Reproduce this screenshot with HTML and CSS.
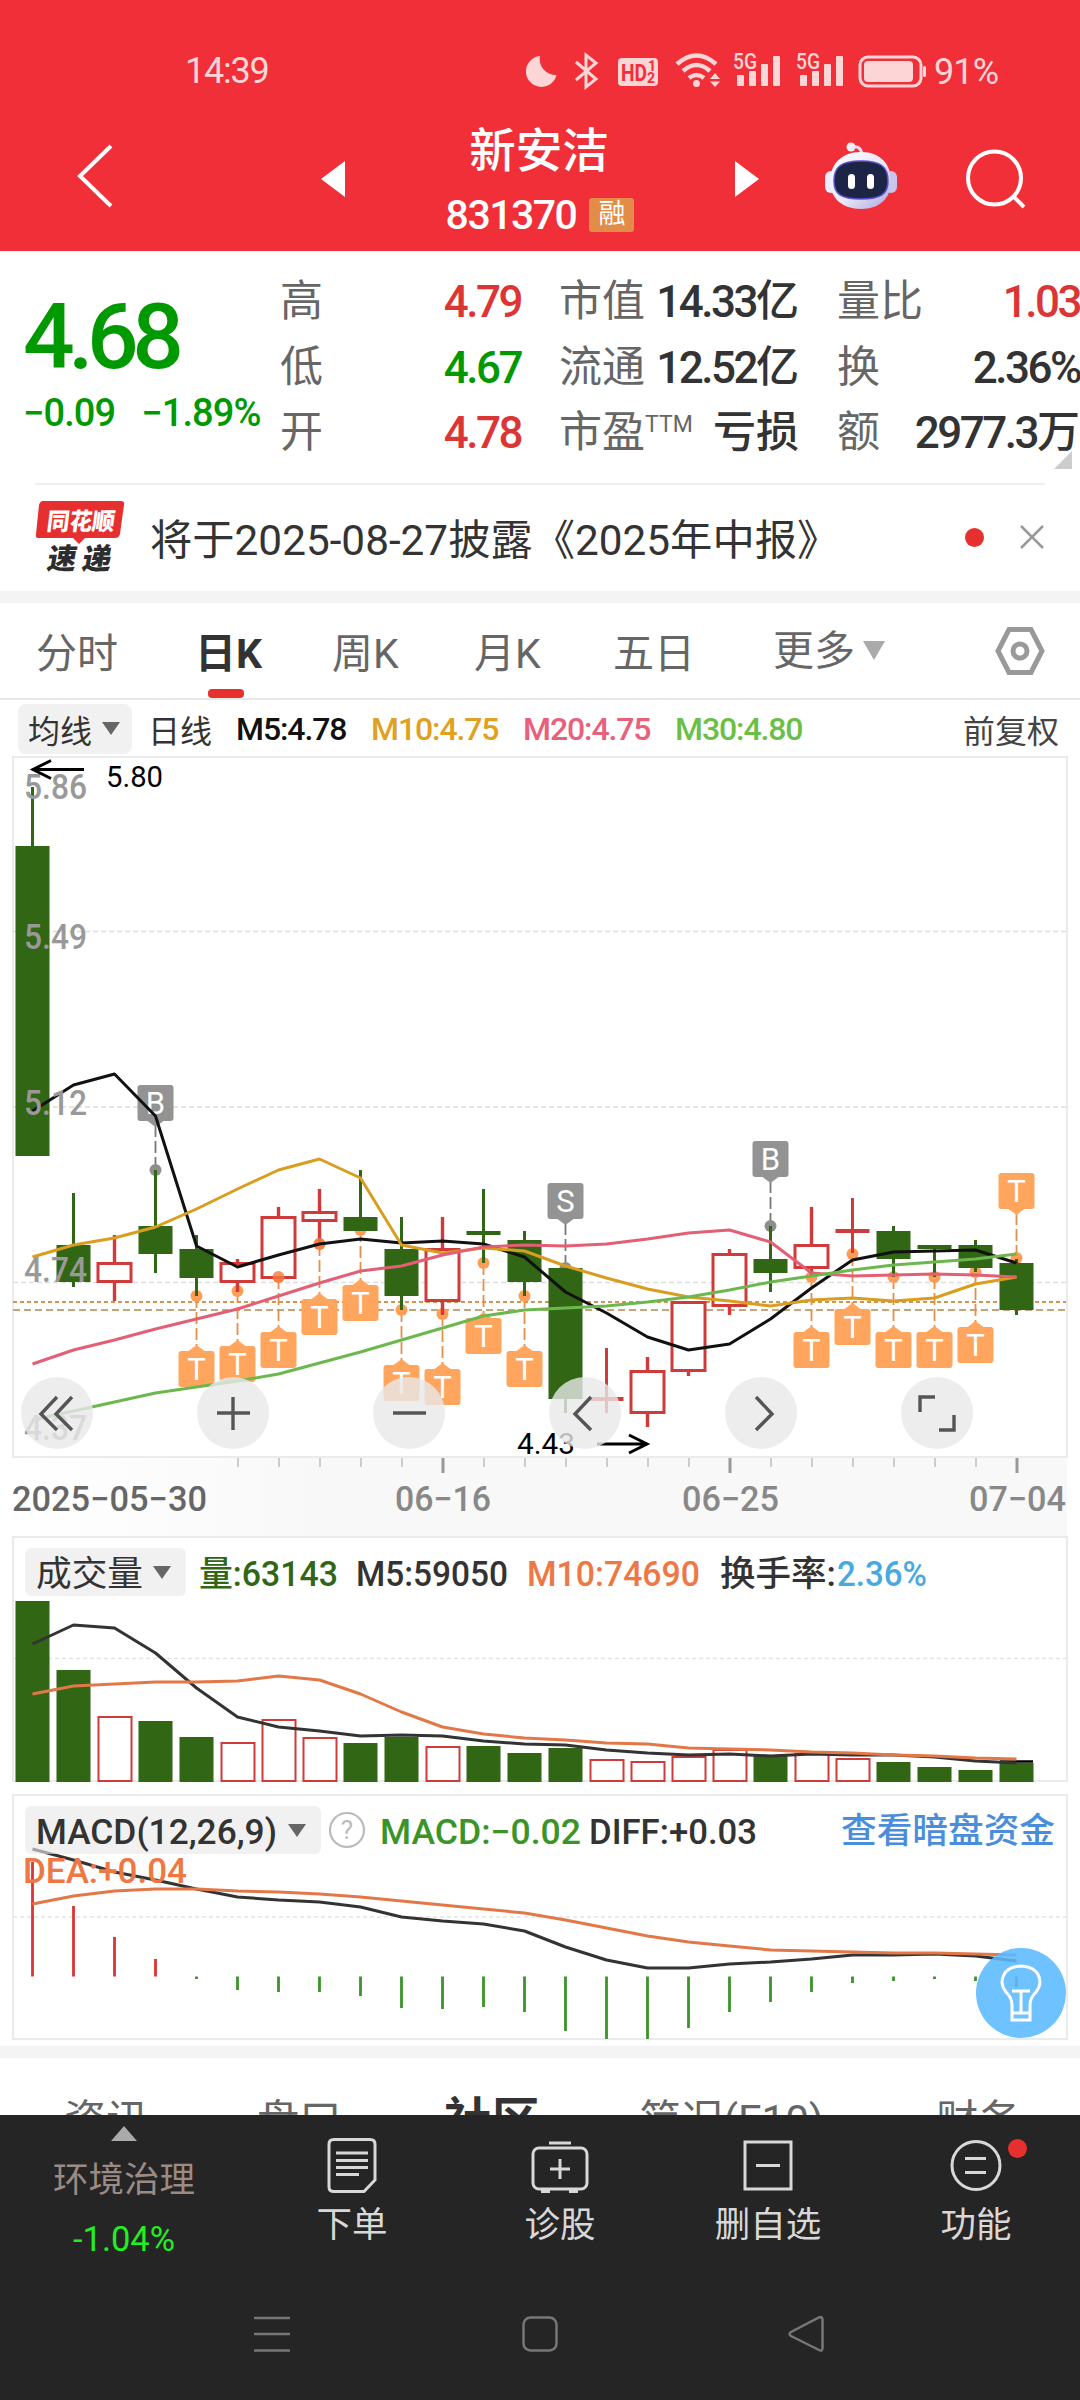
FILE: index.html
```html
<!DOCTYPE html>
<html lang="zh-CN">
<head>
<meta charset="utf-8">
<title>新安洁 831370</title>
<link rel="stylesheet" href="styles.css">
</head>
<body>
<header class="top">
  <div class="status">
    <span class="clock">14:39</span>
    <svg class="status-icons" viewBox="520 40 490 60" width="490" height="60">
      <path d="M540 56A15.500 15.500 0 1 0 556.500 75A16 16 0 0 1 540 56Z"/>
      <path class="ln" d="M576 62L596 79L586 87V55L596 63L576 80"/>
      <rect x="618" y="58" width="40" height="28" rx="4"/>
      <text class="hd" x="621" y="80.500" font-size="23" textLength="26" lengthAdjust="spacingAndGlyphs">HD</text>
      <text class="hd" x="648" y="71" font-size="14">1</text>
      <text class="hd" x="647" y="83" font-size="14">2</text>
      <path class="wf" d="M677 64Q696.500 47 716 64M683 71Q696.500 59 710 71M689 78Q696.500 72 704 78"/>
      <circle cx="696.500" cy="83.500" r="3.500"/>
      <path d="M715 73l5 6h-10zM715 87l5-5.500h-10z"/>
      <g id="sig"><text x="733" y="69" font-size="22" font-weight="500" textLength="24" lengthAdjust="spacingAndGlyphs">5G</text>
      <rect x="737" y="75" width="7" height="11" rx="1"/><rect x="749" y="71" width="7" height="15" rx="1"/><rect x="761" y="64" width="7" height="22" rx="1"/><rect x="773" y="56" width="7" height="30" rx="1"/></g>
      <use href="#sig" x="63"/>
      <rect class="bt" x="860" y="57" width="61" height="29" rx="8"/>
      <rect x="864" y="61" width="49" height="21" rx="4"/>
      <rect x="923" y="66" width="3" height="11" rx="1.500"/>
      <text x="934" y="84" font-size="36" textLength="65">91%</text>
    </svg>
  </div>
  <div class="titlebar">
    <svg class="back" viewBox="70 140 50 72" width="50" height="72"><path d="M111 146L80 176L111 206"/></svg>
    <svg class="tri" viewBox="0 0 24 36" width="24" height="36"><path d="M24 0V36L0 18Z"/></svg>
    <div class="title">
      <div class="name">新安洁</div>
      <div class="code"><span>831370</span><b class="badge">融</b></div>
    </div>
    <svg class="tri right" viewBox="0 0 24 36" width="24" height="36"><path d="M0 0V36L24 18Z"/></svg>
    <svg class="robot" viewBox="824 140 74 72" width="74" height="72">
      <defs><linearGradient id="rb" x1="0" y1="0" x2="1" y2="1"><stop offset="0" stop-color="#fff"/><stop offset=".55" stop-color="#e8e6fa"/><stop offset="1" stop-color="#a9a4dc"/></linearGradient></defs>
      <path d="M852 147Q861 145 862 155" fill="none" stroke="#dcdcf5" stroke-width="3"/>
      <circle cx="851" cy="147" r="4.500" fill="#eeeefa"/>
      <rect x="825" y="171" width="12" height="22" rx="6" fill="#eeedfb"/><rect x="885" y="171" width="12" height="22" rx="6" fill="#c9c5ec"/>
      <path d="M861 152C881 152 891 165 891 181C891 198 880 209 861 209C842 209 830 198 830 181C830 165 841 152 861 152Z" fill="url(#rb)"/>
      <path d="M861 161C881 161 888 167 888 181C888 194 881 199 861 199C841 199 834 194 834 181C834 167 841 161 861 161Z" fill="#1d2547" stroke="#5a50c8" stroke-width="1.500"/>
      <rect x="848" y="174" width="7" height="15" rx="3.500" fill="#fff"/><rect x="867" y="174" width="7" height="15" rx="3.500" fill="#fff"/>
    </svg>
    <svg class="search" viewBox="960 146 70 66" width="70" height="66"><circle cx="994.500" cy="178" r="26.500"/><path d="M1014 197L1024 207"/></svg>
  </div>
</header>

<section class="quote">
  <div class="last">
    <div class="price">4.68</div>
    <div class="change"><span>−0.09</span><span>−1.89%</span></div>
  </div>
  <dl class="stats">
    <dt>高</dt><dd class="up">4.79</dd><dt>市值</dt><dd>14.33<i>亿</i></dd><dt>量比</dt><dd class="up">1.03</dd>
    <dt>低</dt><dd class="down">4.67</dd><dt>流通</dt><dd>12.52<i>亿</i></dd><dt>换</dt><dd>2.36%</dd>
    <dt>开</dt><dd class="up">4.78</dd><dt>市盈<sup>TTM</sup></dt><dd><i>亏损</i></dd><dt>额</dt><dd>2977.3<i>万</i></dd>
  </dl>
  <svg class="corner" viewBox="0 0 18 18" width="18" height="18"><path d="M18 0V18H0Z"/></svg>
</section>

<section class="notice">
  <svg viewBox="36 500 92 74" width="92" height="74">
    <path d="M44 501H122Q126 501 125 505L121 534Q120 538 116 538H86L80 544L74 538H40Q36 538 37 534L40 505Q41 501 44 501Z" fill="#e6302f"/>
    <text class="logo" transform="translate(47 529.500) skewX(-7)" font-size="24" fill="#fff" textLength="68" lengthAdjust="spacingAndGlyphs">同花顺</text>
    <text class="logo" transform="translate(47 569) skewX(-10)" font-size="29" fill="#2d2d2d" textLength="64" lengthAdjust="spacing">速递</text>
  </svg>
  <p>将于2025-08-27披露《2025年中报》</p>
  <i class="dot"></i>
  <svg class="close" viewBox="0 0 24 24" width="24" height="24"><path d="M1 1L23 23M23 1L1 23"/></svg>
</section>

<nav class="periods">
  <a>分时</a><a class="on">日K</a><a>周K</a><a>月K</a><a>五日</a>
  <a class="more">更多<svg viewBox="0 0 22 19" width="22" height="19"><path d="M0 0H22L11 19Z"/></svg></a>
  <svg class="gear" viewBox="0 0 50 48" width="50" height="48"><path d="M14 2.500H36L47 24L36 45.500H14L3 24Z"/><circle cx="25" cy="24" r="7"/></svg>
</nav>

<div class="legend">
  <span class="pill">均线<svg viewBox="0 0 18 13" width="18" height="13"><path d="M0 0H18L9 13Z"/></svg></span>
  <span>日线</span><span class="ma m5">M5:4.78</span><span class="ma m10">M10:4.75</span><span class="ma m20">M20:4.75</span><span class="ma m30">M30:4.80</span><span class="adj">前复权</span>
</div>

<main class="charts">
  <svg id="kline" viewBox="0 756 1080 780" width="1080" height="780"></svg>
  <svg id="volume" viewBox="0 1536 1080 258" width="1080" height="258"></svg>
  <svg id="macd" viewBox="0 1794 1080 252" width="1080" height="252"></svg>
</main>

<nav class="sections"><a>资讯</a><a>盘口</a><a class="on">社区</a><a>简况(F10)</a><a>财务</a></nav>

<footer class="bottom">
  <div class="actions">
    <div class="sector"><svg viewBox="0 0 26 15" width="26" height="15"><path d="M13 0L26 15H0Z"/></svg><span>环境治理</span><em>-1.04%</em></div>
    <a><svg viewBox="0 0 60 60" width="60" height="60"><path d="M12 4.500H48Q53 4.500 53 9V45L42 56.500H12Q7 56.500 7 52V9Q7 4.500 12 4.500Z"/><path d="M14 18H46M14 25.500H46M14 32.500H46M14 39.500H37"/></svg>下单</a>
    <a><svg viewBox="0 0 60 60" width="60" height="60"><rect x="3" y="13" width="54" height="41" rx="6"/><path d="M19 8H41M30 24V44M20 34H40"/><path class="thick" d="M11 56H20M39 56H48"/></svg>诊股</a>
    <a><svg viewBox="0 0 60 60" width="60" height="60"><rect x="7" y="7" width="46" height="47"/><path d="M18 30.500H42"/></svg>删自选</a>
    <a><svg viewBox="0 0 60 60" width="60" height="60"><circle cx="30" cy="30.500" r="24"/><path d="M19 23.500H40M19 37.500H40"/></svg>功能<i class="dot"></i></a>
  </div>
  <div class="sysnav">
    <svg viewBox="0 0 40 40" width="40" height="40"><path d="M2 4H38M2 20H38M2 36.500H38"/></svg>
    <svg viewBox="0 0 40 40" width="40" height="40"><rect x="3.500" y="3.500" width="33" height="33" rx="7"/></svg>
    <svg viewBox="2 0 40 40" width="40" height="40"><path d="M33 3.500Q36.500 2 36.500 6V34Q36.500 38 33 36L5 22Q2 20 5 18Z"/></svg>
  </div>
</footer>
<script src="charts.js"></script>
</body>
</html>
```
FILE: styles.css
```css
* { box-sizing: border-box; }
body { margin: 0; width: 1080px; height: 2400px; overflow: hidden; background: #fff; color: #333; font-family: Roboto, "Noto Sans CJK SC", sans-serif; display: flex; flex-direction: column; }
svg { display: block; flex: none; }
.top { height: 251px; background: #f12f38; color: #fff; flex: none; }
.status { height: 100px; padding: 40px 70px 0 185px; display: flex; justify-content: space-between; color: #fcd5d7; }
.clock { font-size: 36px; line-height: 63px; letter-spacing: -1.2px; }
.status-icons { fill: #fcd5d7; }
.status-icons .hd { fill: #f12f38; font-weight: 700; }
.ln, .wf, .bt { fill: none; stroke: #fcd5d7; stroke-width: 3; }
.wf { stroke-width: 4.500; }
.titlebar { display: flex; height: 151px; padding: 20px 50px 0 70px; align-items: flex-start; }
.back { margin-top: 20px; }
.back path, .search * { fill: none; stroke: #fff; stroke-width: 4; }
.tri { margin: 41px 0 0 201px; fill: #fff; }
.tri.right { margin-left: 0; }
.title { width: 388px; margin-right: 2px; text-align: center; }
.name { font-size: 46.500px; font-weight: 500; line-height: 62px; }
.code { display: flex; justify-content: center; align-items: center; gap: 13px; height: 66px; font-size: 41px; font-weight: 500; letter-spacing: -1.500px; padding-left: 2px; }
.badge { width: 45px; height: 34px; border-radius: 3px; background: #e38c47; font-size: 27px; line-height: 33px; font-weight: 400; letter-spacing: 0; }
.robot { margin: 20px 0 0 65px; }
.search { margin: 26px 0 0 62px; }

.quote { height: 232px; display: flex; position: relative; flex: none; }
.last { width: 280px; padding: 36px 0 0 23px; color: #090; }
.price { font-size: 91px; line-height: 100px; font-weight: 500; letter-spacing: -6.500px; }
.change { display: flex; gap: 26px; font-size: 38px; line-height: 50px; margin-top: 1px; letter-spacing: -.9px; white-space: nowrap; font-weight: 500; }
.stats { margin: 18px 0 0; width: 800px; display: grid; grid-template-columns: 90px 151px 172px 106px 123px 158px; grid-auto-rows: 65.500px; }
.stats dt, .stats dd { margin: 0; line-height: 65px; white-space: nowrap; }
.stats dt { font-size: 43px; color: #666; }
.stats dd { font-size: 44px; font-weight: 500; letter-spacing: -2.500px; display: flex; justify-content: flex-end; padding-top: 1px; }
.stats dd i { font-style: normal; font-size: 43px; letter-spacing: 0; margin-top: -1px; }
.stats dt:nth-child(6n+3), .stats dt:nth-child(6n+5) { padding-left: 38px; }
.stats sup { font-size: 23px; line-height: 1; vertical-align: 15px; }
.up { color: #dc3535; }
.down { color: #090; }
.corner { position: absolute; right: 8px; bottom: 14px; fill: #ccc; }

.notice { height: 108px; margin: 0 35px; border-top: 2px solid #eee; display: flex; align-items: center; padding: 0 1px 2px 0; flex: none; }
.notice p { margin: -2px 0 0 23px; font-size: 42.300px; flex: 1; white-space: nowrap; }
.logo { font-family: "Noto Sans CJK SC", sans-serif; font-weight: 900; }
.dot { width: 19px; height: 19px; border-radius: 50%; background: #e6302f; }
.close { margin-left: 36px; stroke: #999; stroke-width: 2.500; }

.periods { height: 109px; border-top: 12px solid #f4f4f4; border-bottom: 2px solid #e8e8e8; display: grid; grid-template-columns: 159px 137px 142px 139px 160px 222px 50px; padding-left: 36px; align-items: center; font-size: 41px; color: #666; flex: none; }
.periods a { line-height: 102px; height: 95px; }
.periods .on { font-weight: 700; color: #333; position: relative; }
.periods .on::after { content: ""; position: absolute; left: 13px; bottom: 0; width: 36px; height: 9px; border-radius: 4px; background: #e6302f; }
.more { display: flex; align-items: center; gap: 8px; fill: #aaa; }
.gear { fill: none; stroke: #999; stroke-width: 5; }

.legend { height: 56px; flex: none; display: grid; grid-template-columns: 130px 88px 135px 152px 152px 288px 100px; padding: 1px 0 0 18px; align-items: center; font-size: 32px; color: #333; }
.legend .ma { font-weight: 500; letter-spacing: -1.100px; }
.pill { width: 114px; height: 50px; border-radius: 8px; background: #f1f1f1; display: flex; align-items: center; gap: 10px; padding-left: 10px; fill: #666; }
.m5 { color: #111; } .m10 { color: #e0a020; } .m20 { color: #e8607a; } .m30 { color: #6abf47; }
.adj { color: #444; }

.charts { flex: none; }

.sections { height: 69px; flex: none; overflow: hidden; border-top: 12px solid #f4f4f4; display: grid; grid-template-columns: 193px 187px 195px 297px 100px; padding: 30px 0 0 64px; font-size: 42.300px; line-height: 66px; color: #666; white-space: nowrap; }
.sections .on { font-size: 48px; font-weight: 700; color: #333; }

.bottom { height: 285px; flex: none; background: #252525; color: #d8d8d8; }
.actions { display: grid; grid-template-columns: 248px repeat(4, 208px); height: 185px; padding-top: 11px; }
.sector { display: flex; flex-direction: column; align-items: center; fill: #aaa; color: #9c8a84; font-size: 35.500px; }
.sector span { margin-top: 13px; line-height: 52px; }
.sector em { font-style: normal; font-size: 34.500px; color: #2e2; margin-top: 11px; line-height: 44px; }
.actions a { position: relative; display: flex; flex-direction: column; align-items: center; font-size: 35.500px; line-height: 60px; padding-top: 9px; }
.actions a > svg { fill: none; stroke: #d8d8d8; stroke-width: 3; }
.actions .thick { stroke-width: 4; }
.actions .dot { position: absolute; left: 136px; top: 13px; }
.sysnav { display: grid; grid-template-columns: repeat(3, 40px); column-gap: 228px; padding: 14px 0 0 252px; fill: none; stroke: #777; stroke-width: 2.500; }
```
FILE: charts.js
```js
const NS = 'http://www.w3.org/2000/svg';
const X0 = 32.5, STEP = 41, W = 34;
const cx = i => X0 + STEP * i;
const GREEN = '#306614', RED = '#cf3a3a';

function add(svg, tag, attrs, text) {
  const e = document.createElementNS(NS, tag);
  for (const k in attrs) e.setAttribute(k, attrs[k]);
  if (text) e.textContent = text;
  svg.appendChild(e);
  return e;
}
function label(svg, x, y, size, fill, text, width, weight = 500) {
  return add(svg, 'text', { x, y, 'font-size': size, fill, 'font-weight': weight, textLength: width, lengthAdjust: 'spacingAndGlyphs' }, text);
}
function line(svg, x1, y1, x2, y2, stroke, w, dash) {
  add(svg, 'line', { x1, y1, x2, y2, stroke, 'stroke-width': w, ...(dash ? { 'stroke-dasharray': dash } : {}) });
}
function curve(svg, ys, color) {
  add(svg, 'polyline', { points: ys.map((y, i) => cx(i) + ',' + y).join(' '), fill: 'none', stroke: color, 'stroke-width': 3, 'stroke-linejoin': 'round' });
}
function frame(svg, y, h) {
  add(svg, 'rect', { x: 13, y, width: 1054, height: h, fill: 'none', stroke: '#ebebeb', 'stroke-width': 2 });
}
function pill(svg, x, y, w, triX) {
  add(svg, 'rect', { x, y, width: w, height: 48, rx: 6, fill: '#e8e8e8', opacity: .62 });
  add(svg, 'path', { d: `M${triX} ${y + 18}h18l-9 13z`, fill: '#666' });
}

/* Candlesticks: high, body top, body bottom, low, type */
const candles = [
  [787,846,1156,1156,'g'],[1193,1245,1282,1287,'g'],[1235,1262,1283,1301,'r'],[1170,1226,1254,1273,'g'],
  [1235,1249,1278,1296,'g'],[1259,1262,1283,1292,'r'],[1207,1216,1279,1279,'r'],[1189,1211,1222,1243,'r'],
  [1170,1217,1231,1231,'g'],[1217,1249,1296,1310,'g'],[1217,1248,1302,1315,'r'],[1189,1231,1235,1263,'g'],
  [1231,1240,1282,1296,'g'],[1268,1268,1399,1413,'g'],[1348,1397,1401,1413,'c'],[1357,1370,1414,1427,'r'],
  [1301,1301,1372,1376,'r'],[1249,1253,1307,1315,'r'],[1226,1259,1273,1292,'g'],[1207,1244,1269,1277,'r'],
  [1198,1229,1233,1253,'c'],[1226,1231,1259,1277,'g'],[1245,1245,1249,1277,'g'],[1240,1245,1268,1272,'g'],
  [1259,1263,1310,1315,'g']];
const marks = [[3,1170,'B'],[4,1296,'T'],[5,1291,'T'],[6,1277,'T'],[7,1244,'T'],[8,1230,'T'],[9,1310,'T'],
  [10,1314,'T'],[11,1263,'T'],[12,1296,'T'],[13,1268,'S'],[18,1226,'B'],[19,1277,'T'],[20,1254,'T'],
  [21,1277,'T'],[22,1277,'T'],[23,1272,'T'],[24,1258,'T',1]];

const k = document.getElementById('kline');
const defs = add(k, 'defs', {});
const fade = add(defs, 'linearGradient', { id: 'fade' });
add(fade, 'stop', { offset: 0, 'stop-color': '#fff' });
add(fade, 'stop', { offset: .3, 'stop-color': '#f8f8f8' });
add(fade, 'stop', { offset: 1, 'stop-color': '#f8f8f8' });
add(k, 'rect', { x: 13, y: 1458, width: 1054, height: 78, fill: 'url(#fade)' });
frame(k, 757, 700);
[931.5, 1107, 1282.5].forEach(y => line(k, 13, y, 1066, y, '#dedede', 1.4, '5 3'));
line(k, 13, 1302, 1066, 1302, '#d4934e', 2, '4 3');
line(k, 13, 1310, 1066, 1310, '#c4a67a', 2, '7 4');

marks.forEach(([i, y, t, up]) => {
  const x = cx(i), above = t !== 'T' || up;
  const col = t === 'T' ? '#ffa55e' : '#939393', top = above ? y - 85 : y + 55;
  line(k, x, above ? top + 40 : y, x, above ? y : top - 2, t === 'T' ? '#e88d48' : '#777', 1.8, '12 4');
  add(k, 'circle', { cx: x, cy: y, r: 6, fill: t === 'T' ? '#ff9c55' : '#8e8e8e' });
  add(k, 'path', { d: above ? `M${x - 8} ${top + 36}h16l-8 6z` : `M${x - 8} ${top}h16l-8-6z`, fill: col });
  add(k, 'rect', { x: x - 18, y: top, width: 36, height: 36, rx: 3, fill: col });
  add(k, 'text', { x, y: top + 29, 'font-size': 31, fill: '#fff', 'text-anchor': 'middle' }, t);
});
candles.forEach(([h, t, b, l, c], i) => {
  const x = cx(i), col = c === 'g' ? GREEN : RED;
  if (c === 'r') {
    line(k, x, h, x, t, col, 3.4); line(k, x, b, x, l, col, 3.4);
    add(k, 'rect', { x: x - 16.5, y: t + 1.5, width: 33, height: b - t - 3, fill: '#fff', stroke: col, 'stroke-width': 3 });
  } else {
    line(k, x, h, x, l, col, 3);
    add(k, 'rect', { x: x - W / 2, y: t, width: W, height: b - t, fill: col });
  }
});
/* low markers that sit over a hollow body */
[[6, 1277], [7, 1244]].forEach(([i, y]) => add(k, 'circle', { cx: cx(i), cy: y, r: 6, fill: '#f47a3c', opacity: .8 }));
curve(k, [1111,1085,1074,1116,1246,1267,1255,1244,1239,1243,1241,1244,1257,1292,1313,1337,1350,1344,1319,1288,1260,1252,1251,1250,1263], '#111');
curve(k, [1257,1245,1238,1227,1209,1189,1170,1159,1178,1245,1253,1248,1251,1266,1278,1289,1297,1301,1306,1300,1298,1301,1298,1284,1277], '#d99d1f');
curve(k, [1364,1350,1340,1329,1319,1309,1296,1283,1271,1266,1255,1247,1245,1246,1244,1239,1233,1230,1242,1273,1276,1275,1274,1275,1277], '#e35f73');
curve(k, [1420,1411,1402,1393,1387,1381,1374,1363,1352,1340,1328,1316,1310,1308,1306,1302,1297,1290,1282,1276,1270,1265,1262,1259,1254], '#6cb84e');
[['5.86', 799], ['5.49', 949], ['5.12', 1115], ['4.74', 1282], ['4.37', 1440]].forEach(([t, y]) =>
  label(k, 24, y, 35.5, '#999', t, 63));
add(k, 'path', { d: 'M84 769.500H33M51 760.500L33 769.500L51 778.500M597 1444H647M629 1435L647 1444L629 1453', fill: 'none', stroke: '#000', 'stroke-width': 3 });
label(k, 106, 787, 30, '#000', '5.80', 57, 400);
label(k, 517, 1454, 30, '#000', '4.43', 58, 400);

[57, 233, 409, 585, 761, 937].forEach((x, i) => {
  add(k, 'circle', { cx: x, cy: 1413, r: 36, fill: '#e9e9e9', opacity: .8 });
  const d = [
    'M0-16L-16 1L0 17M15-16L-1 1L15 17', 'M-16 0H17M0-16V17', 'M-16 0H17',
    'M6-16L-10 1L6 17', 'M-5-16L11 1L-5 17', 'M-17-1V-16H-2M17 2V17H2'][i];
  add(k, 'path', { d, transform: `translate(${x} 1413)`, fill: 'none', stroke: '#555', 'stroke-width': 3.4 });
});
for (let i = 5; i < 25; i++) {
  const big = [10, 17, 24].includes(i);
  line(k, cx(i) + .5, 1458, cx(i) + .5, big ? 1473 : 1467, big ? '#999' : '#ccc', big ? 3 : 2);
}
label(k, 12, 1511, 35, '#666', '2025−05−30', 195);
label(k, 395, 1511, 35, '#888', '06−16', 96);
label(k, 682, 1511, 35, '#888', '06−25', 97);
label(k, 969, 1511, 35, '#888', '07−04', 97);

const v = document.getElementById('volume');
frame(v, 1537, 244);
line(v, 13, 1658.5, 1066, 1658.5, '#e4e4e4', 1.5, '4 3');
[1601,1670,1717,1721,1737,1743,1720,1738,1743,1737,1747,1746,1753,1748,1760,1762,1757,1750,1756,1754,1759,1762,1767,1770,1763].forEach((y, i) => {
  if ([2,5,6,7,10,14,15,16,17,19,20].includes(i))
    add(v, 'rect', { x: cx(i) - 16, y, width: 33, height: 1781 - y, fill: '#fff', stroke: RED, 'stroke-width': 2 });
  else add(v, 'rect', { x: cx(i) - W / 2, y, width: W, height: 1782 - y, fill: GREEN });
});
line(v, 1000, 1761.5, 1033, 1761.5, '#000', 2.5);
curve(v, [1644,1625,1628,1653,1688,1717,1727,1731,1736,1735,1736,1741,1744,1745,1750,1753,1755,1754,1756,1754,1755,1755,1757,1761,1763], '#333');
curve(v, [1694,1686,1684,1682,1682,1681,1676,1680,1694,1712,1727,1734,1738,1740,1743,1744,1748,1749,1750,1752,1753,1755,1756,1758,1759], '#e27748');
pill(v, 25, 1548, 161, 153);
label(v, 36, 1586, 35.5, '#333', '成交量', 107, 400);
label(v, 199, 1585.5, 35, '#306614', '量:63143', 139);
label(v, 356, 1585.5, 35, '#333', 'M5:59050', 152);
label(v, 527, 1585.5, 35, '#ee7744', 'M10:74690', 173);
label(v, 720, 1586, 35, '#333', '换手率:', 116);
label(v, 837, 1585.5, 35, '#4aa8e0', '2.36%', 90);

const m = document.getElementById('macd');
frame(m, 1795, 244);
line(m, 13, 1917, 1066, 1917, '#e4e4e4', 1.5, '4 3');
[1862,1906,1937,1959,1979,1990,1992,1992,1996,2008,2009,2007,2012,2031,2039,2039,2028,2012,2002,1992,1983,1981,1979,1981,1987].forEach((y, i) =>
  line(m, cx(i), 1976.5, cx(i), y, i < 4 ? '#d33' : '#3a9428', 2.8));
curve(m, [1849,1860,1872,1880,1889,1897,1900,1902,1907,1917,1921,1924,1931,1947,1960,1968,1968,1964,1962,1959,1955,1955,1954,1956,1961], '#333');
curve(m, [1904,1896,1891,1889,1889,1891,1892,1894,1897,1901,1905,1909,1913,1920,1928,1936,1942,1946,1950,1951,1952,1953,1953,1954,1955], '#e27748');
pill(m, 25, 1806, 296, 288);
label(m, 36, 1843.5, 35, '#333', 'MACD(12,26,9)', 241);
add(m, 'circle', { cx: 347, cy: 1830, r: 17, fill: 'none', stroke: '#bbb', 'stroke-width': 2.2 });
add(m, 'text', { x: 347, y: 1839, 'font-size': 26, fill: '#bbb', 'text-anchor': 'middle' }, '?');
label(m, 380, 1843.5, 35, '#3a9428', 'MACD:−0.02', 201);
label(m, 589, 1843.5, 35, '#333', 'DIFF:+0.03', 168);
label(m, 841, 1843, 35.5, '#4a8edb', '查看暗盘资金', 214);
label(m, 23, 1883, 35, '#ee7744', 'DEA:+0.04', 164);
add(m, 'circle', { cx: 1021, cy: 1993, r: 45, fill: '#5abaff', opacity: .88 });
add(m, 'path', { d: 'M1012 2005Q1012 1998 1006 1992Q1002 1987 1002 1982Q1003 1967 1021 1966Q1039 1967 1040 1982Q1040 1987 1036 1992Q1030 1998 1030 2005V2020H1012ZM1012 2013H1030M1012 1991H1030M1021 1991V2012', fill: 'none', stroke: '#fff', 'stroke-width': 3 });
```
